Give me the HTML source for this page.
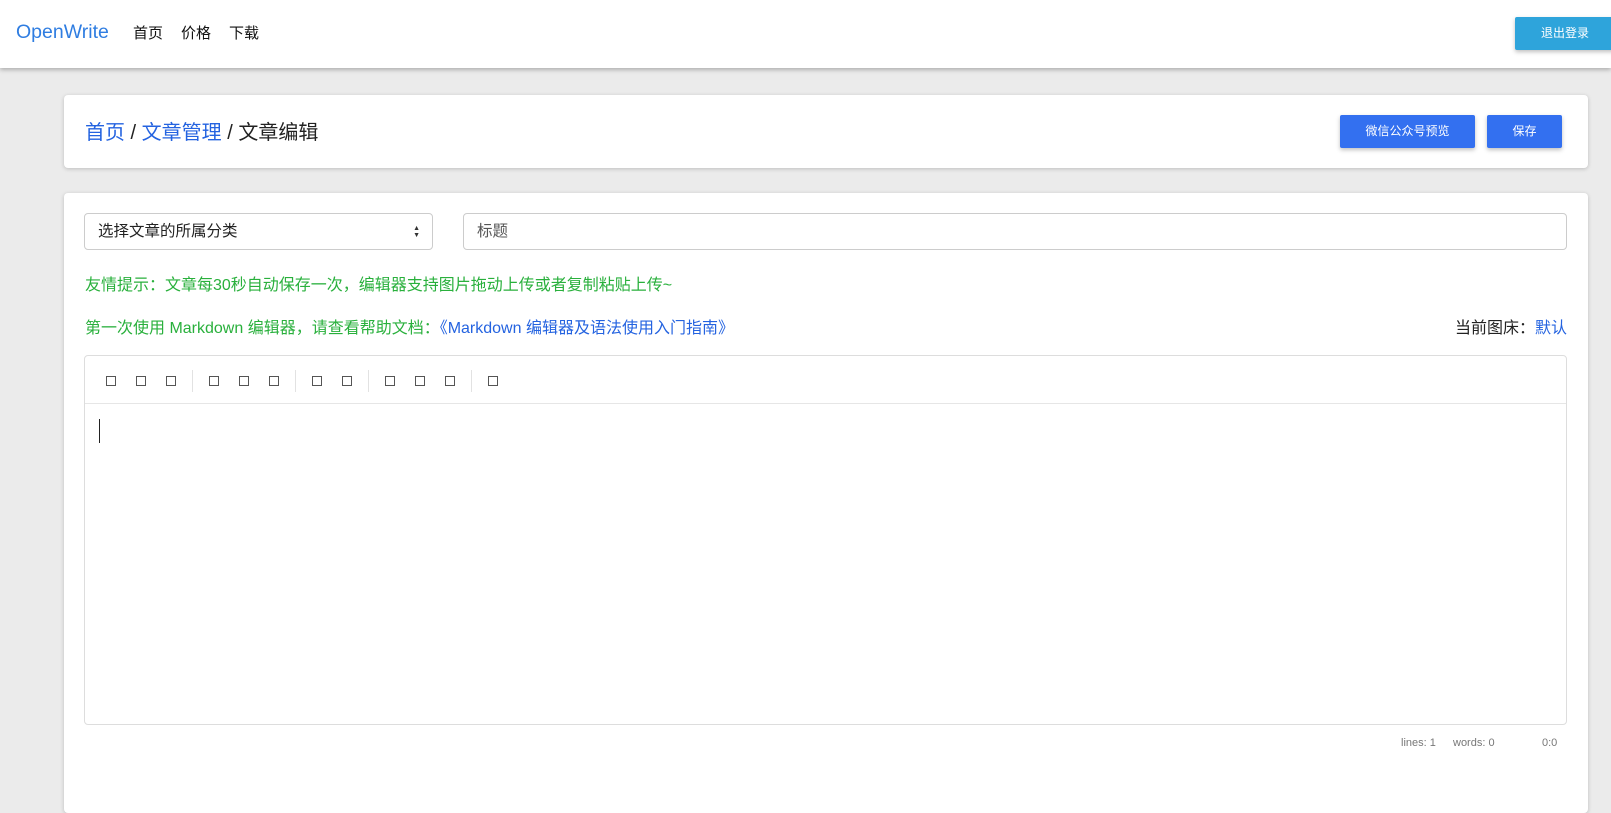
<!DOCTYPE html>
<html><head><meta charset="utf-8"><style>
*{box-sizing:border-box;margin:0;padding:0}
body{width:1611px;height:794px;overflow:hidden;background:#ebebeb;font-family:"Liberation Sans","Noto Sans CJK SC",sans-serif;position:relative}
.a{position:absolute}
.nav{left:0;top:0;width:1611px;height:68px;background:#fff;box-shadow:0 2px 4px rgba(0,0,0,.25)}
.card{background:#fff;border-radius:4px;box-shadow:0 1px 4px rgba(0,0,0,.2)}
.btn{color:#fff;font-size:12px;text-align:center;border-radius:2px;box-shadow:0 2px 4px rgba(0,0,0,.25)}
.sq{display:inline-block;width:10px;height:10px;border:1px solid #555;margin:0 10px;vertical-align:middle}
.sep{display:inline-block;width:1px;height:22px;background:#e2e2e2;vertical-align:middle;margin:0 6px}
</style></head><body>
<div class="a nav"></div>
<div class="a" style="left:16px;top:21px;font-size:19.5px;color:#2f7de1">OpenWrite</div>
<div class="a" style="left:133px;top:22px;font-size:15px;color:#111">首页</div>
<div class="a" style="left:181px;top:22px;font-size:15px;color:#111">价格</div>
<div class="a" style="left:229px;top:22px;font-size:15px;color:#111">下载</div>
<div class="a btn" style="left:1515px;top:17px;width:100px;height:33px;line-height:33px;background:#2ea4db">退出登录</div>

<div class="a card" style="left:64px;top:95px;width:1524px;height:73px"></div>
<div class="a" style="left:85px;top:116px;font-size:20px;color:#222"><span style="color:#2463e0">首页</span> / <span style="color:#2463e0">文章管理</span> / 文章编辑</div>
<div class="a btn" style="left:1340px;top:115px;width:135px;height:33px;line-height:33px;background:#3370f0">微信公众号预览</div>
<div class="a btn" style="left:1487px;top:115px;width:75px;height:33px;line-height:33px;background:#3370f0">保存</div>

<div class="a card" style="left:64px;top:193px;width:1524px;height:620px"></div>
<div class="a" style="left:84px;top:213px;width:349px;height:37px;border:1px solid #ccc;border-radius:4px;font-size:15.5px;line-height:35px;padding-left:13px;color:#222">选择文章的所属分类<span style="position:absolute;right:12px;top:0;font-size:7px;line-height:7px;padding-top:11px;color:#333">▲<br>▼</span></div>
<div class="a" style="left:463px;top:213px;width:1104px;height:37px;border:1px solid #ccc;border-radius:4px;font-size:15.5px;line-height:35px;padding-left:13px;color:#555">标题</div>
<div class="a" style="left:85px;top:271px;font-size:16px;color:#29b03c">友情提示：文章每30秒自动保存一次，编辑器支持图片拖动上传或者复制粘贴上传~</div>
<div class="a" style="left:85px;top:314px;font-size:16px;color:#29b03c">第一次使用 Markdown 编辑器，请查看帮助文档：<span style="color:#2463e0">《Markdown 编辑器及语法使用入门指南》</span></div>
<div class="a" style="right:44px;top:314px;font-size:16px;color:#222">当前图床：<span style="color:#2463e0">默认</span></div>

<div class="a" style="left:84px;top:355px;width:1483px;height:370px;border:1px solid #ddd;border-radius:4px"></div>
<div class="a" style="left:85px;top:403px;width:1481px;height:1px;background:#e6e6e6"></div>
<div class="a" style="left:96px;top:369px;height:24px;line-height:24px;font-size:0">
<span class="sq"></span><span class="sq"></span><span class="sq"></span><span class="sep"></span><span class="sq"></span><span class="sq"></span><span class="sq"></span><span class="sep"></span><span class="sq"></span><span class="sq"></span><span class="sep"></span><span class="sq"></span><span class="sq"></span><span class="sq"></span><span class="sep"></span><span class="sq"></span>
</div>
<div class="a" style="left:99px;top:419px;width:1px;height:24px;background:#222"></div>
<div class="a" style="left:1401px;top:737px;font-size:11px;color:#777">lines: 1</div>
<div class="a" style="left:1453px;top:737px;font-size:11px;color:#777">words: 0</div>
<div class="a" style="left:1542px;top:737px;font-size:11px;color:#777">0:0</div>
</body></html>
